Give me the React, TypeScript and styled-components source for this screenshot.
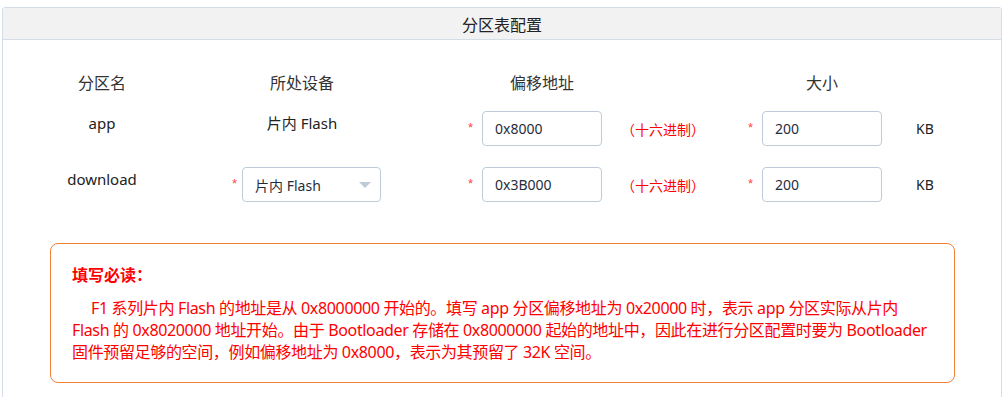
import styled, { createGlobalStyle } from 'styled-components';

const GlobalStyle = createGlobalStyle`
  html, body {
    margin: 0;
    padding: 0;
    background: #ffffff;
  }
  body {
    font-family: "Noto Sans", "Noto Sans CJK SC", sans-serif;
    color: #333333;
  }
`;

// name | device | star | offset | hint | star | size | unit
const COLUMNS = '198px 202px 79px 120px 138px 22px 120px 1fr';

const NOTICE_LINES = [
  'F1 系列片内 Flash 的地址是从 0x8000000 开始的。填写 app 分区偏移地址为 0x20000 时，表示 app 分区实际从片内',
  'Flash 的 0x8020000 地址开始。由于 Bootloader 存储在 0x8000000 起始的地址中，因此在进行分区配置时要为 Bootloader',
  '固件预留足够的空间，例如偏移地址为 0x8000，表示为其预留了 32K 空间。',
];

const Page = styled.div`
  padding: 7px 3px 0 2px;
`;

const Panel = styled.section`
  border: 1px solid #d5dde6;
  border-radius: 3px;
  background: #ffffff;
`;

const PanelHeader = styled.header`
  height: 31px;
  display: flex;
  align-items: center;
  justify-content: center;
  background: #f2f2f2;
  border-bottom: 1px solid #d5dde6;
  border-radius: 3px 3px 0 0;
  font-family: "Noto Sans CJK SC", sans-serif;
  font-size: 16px;
  color: #222222;
`;

const PanelBody = styled.div`
  padding: 32px 0 30px;
`;

const Table = styled.div`
  display: flex;
  flex-direction: column;
  gap: 21px;
`;

const HeadRow = styled.div`
  display: grid;
  grid-template-columns: ${COLUMNS};
  height: 20px;
  margin-bottom: -2px;
`;

const HeadCell = styled.div<{ col: number }>`
  grid-column: ${(p) => p.col};
  text-align: center;
  font-family: "Noto Sans CJK SC", sans-serif;
  font-size: 16px;
  line-height: 20px;
  color: #333333;
`;

const Row = styled.div`
  display: grid;
  grid-template-columns: ${COLUMNS};
  height: 35px;
`;

const LabelCell = styled.div`
  align-self: start;
  text-align: center;
  font-size: 15px;
  line-height: 24px;
  color: #222222;
`;

const DeviceCell = styled.div`
  display: flex;
  align-items: center;
  gap: 5px;
  padding-left: 31px;
`;

const Star = styled.span`
  color: #ff4949;
  font-family: "Liberation Sans", sans-serif;
  font-size: 13px;
  line-height: 1;
  margin-top: -3px;
`;

const StarCell = styled.div`
  display: flex;
  align-items: center;
  justify-content: flex-end;
  padding-right: 9px;
`;

const Input = styled.div`
  box-sizing: border-box;
  height: 35px;
  display: flex;
  align-items: center;
  padding: 0 12px;
  border: 1px solid #bfcbd9;
  border-radius: 4px;
  font-size: 14px;
  color: #1f2d3d;
`;

const Select = styled(Input)`
  width: 139px;
  justify-content: space-between;
  padding-right: 9px;
`;

const Caret = styled.span`
  width: 0;
  height: 0;
  border-left: 6px solid transparent;
  border-right: 6px solid transparent;
  border-top: 6px solid #bfcbd9;
`;

const Hint = styled.div`
  display: flex;
  align-items: center;
  padding-left: 19px;
  font-family: "Noto Sans CJK SC", sans-serif;
  font-size: 14px;
  color: #ff0000;
`;

const Unit = styled.div`
  display: flex;
  align-items: center;
  padding-left: 34px;
  font-size: 14px;
  color: #222222;
`;

const Notice = styled.div`
  margin: 41px 46px 0 47px;
  padding: 19px 21px;
  border: 1px solid #f08235;
  border-radius: 8px;
  color: #ff0000;
`;

const NoticeTitle = styled.div`
  font-family: "Noto Sans CJK SC", sans-serif;
  font-weight: bold;
  font-size: 16px;
  line-height: 22px;
`;

const NoticeText = styled.div`
  margin-top: 12px;
  font-size: 16px;
  line-height: 22px;
  letter-spacing: -0.35px;
  white-space: nowrap;
`;

const NoticeLine = styled.div<{ indent?: boolean }>`
  padding-left: ${(p) => (p.indent ? 19 : 0)}px;
`;

interface PartitionRowProps {
  name: string;
  offset: string;
  size: string;
  editableDevice?: boolean;
}

function PartitionRow({ name, offset, size, editableDevice }: PartitionRowProps) {
  return (
    <Row>
      <LabelCell>{name}</LabelCell>
      {editableDevice ? (
        <DeviceCell>
          <Star>*</Star>
          <Select>
            <span>片内 Flash</span>
            <Caret />
          </Select>
        </DeviceCell>
      ) : (
        <LabelCell>片内 Flash</LabelCell>
      )}
      <StarCell>
        <Star>*</Star>
      </StarCell>
      <Input>{offset}</Input>
      <Hint>（十六进制）</Hint>
      <StarCell>
        <Star>*</Star>
      </StarCell>
      <Input>{size}</Input>
      <Unit>KB</Unit>
    </Row>
  );
}

export default function App() {
  return (
    <Page>
      <GlobalStyle />
      <Panel>
        <PanelHeader>分区表配置</PanelHeader>
        <PanelBody>
          <Table>
            <HeadRow>
              <HeadCell col={1}>分区名</HeadCell>
              <HeadCell col={2}>所处设备</HeadCell>
              <HeadCell col={4}>偏移地址</HeadCell>
              <HeadCell col={7}>大小</HeadCell>
            </HeadRow>
            <PartitionRow name='app' offset='0x8000' size='200' />
            <PartitionRow name='download' offset='0x3B000' size='200' editableDevice />
          </Table>
          <Notice>
            <NoticeTitle>填写必读：</NoticeTitle>
            <NoticeText>
              {NOTICE_LINES.map((line, i) => (
                <NoticeLine key={i} indent={i === 0}>
                  {line}
                </NoticeLine>
              ))}
            </NoticeText>
          </Notice>
        </PanelBody>
      </Panel>
    </Page>
  );
}
